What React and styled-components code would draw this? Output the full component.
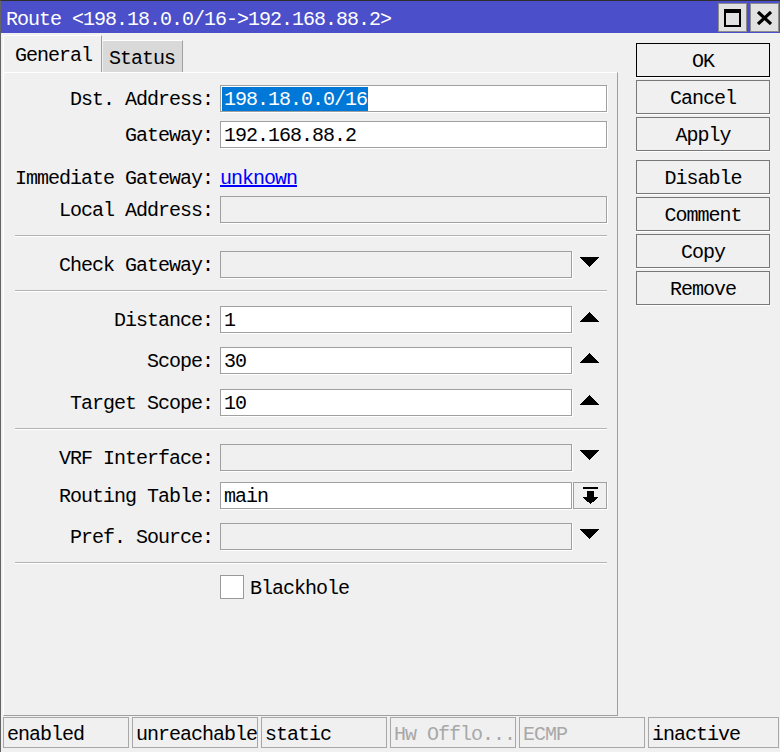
import styled, { createGlobalStyle } from 'styled-components'

const GlobalStyle = createGlobalStyle`
  html, body {
    margin: 0;
    padding: 0;
    background: #f0f0f0;
  }
  body {
    font-family: 'Liberation Mono', 'DejaVu Sans Mono', monospace;
    font-size: 20px;
    letter-spacing: -1px;
    color: #000;
    overflow: hidden;
  }
`

const Window = styled.div`
  box-sizing: border-box;
  width: 780px;
  height: 752px;
  display: flex;
  flex-direction: column;
  background: #f0f0f0;
  border-top: 1px solid #2f2f2f;
  border-left: 1px solid #646464;
`

const TitleBar = styled.div`
  flex: none;
  height: 32px;
  display: flex;
  justify-content: space-between;
  padding-left: 5px;
  background: #4b4fca;
  color: #fff;
`

const Title = styled.span`
  align-self: center;
  white-space: nowrap;
  padding-top: 5px;
`

const TitleButtons = styled.div`
  display: flex;
  gap: 3px;
  margin: 2px 1px 0 0;
`

const TitleButton = styled.div`
  box-sizing: border-box;
  width: 29px;
  height: 29px;
  display: flex;
  align-items: center;
  justify-content: center;
  background: #e1e1e1;
  border: 1px solid #8c8c8c;
`

const Body = styled.div`
  flex: 1;
  display: flex;
  padding-left: 2px;
  min-height: 0;
`

const TabArea = styled.div`
  width: 615px;
  display: flex;
  flex-direction: column;
`

const TabStrip = styled.div`
  flex: none;
  height: 39px;
  display: flex;
  align-items: flex-end;
`

const Tab = styled.div`
  box-sizing: border-box;
  display: flex;
  align-items: center;
  height: ${p => (p.$active ? 37 : 32)}px;
  width: ${p => (p.$active ? 99 : 80)}px;
  padding: 3px 0 0 ${p => (p.$active ? 11 : 6)}px;
  background: ${p => (p.$active ? '#f0f0f0' : '#d9d9d9')};
  border-top: 1px solid #fff;
  border-left: ${p => (p.$active ? '1px solid #fff' : 'none')};
  border-right: 1px solid #a0a0a0;
  margin-left: ${p => (p.$active ? 0 : 1)}px;
`

const Panel = styled.div`
  flex: 1;
  box-sizing: border-box;
  display: flex;
  flex-direction: column;
  padding: 12px 10px 0 11px;
  border-top: 1px solid #fff;
  border-left: 1px solid #fff;
  border-right: 1px solid #a0a0a0;
  border-bottom: 1px solid #a0a0a0;
`

const Row = styled.div`
  display: flex;
  align-items: center;
  gap: 7px;
  height: ${p => p.$height || 27}px;
  margin-top: ${p => p.$gap || 0}px;
`

const Label = styled.div`
  flex: none;
  width: 198px;
  padding-top: 2px;
  text-align: right;
  white-space: nowrap;
`

const Control = styled.div`
  flex: 1;
  display: flex;
  height: 100%;
`

const Field = styled.div`
  flex: 1;
  box-sizing: border-box;
  display: flex;
  align-items: center;
  padding-left: 1px;
  background: ${p => (p.$disabled ? '#f0f0f0' : '#fff')};
  border: 1px solid #a0a0a0;
  box-shadow: 1px 1px 0 #fff;
`

const Value = styled.span`
  box-sizing: border-box;
  height: 24px;
  line-height: 22px;
  padding: 2px 1px 0 2px;
  background: ${p => (p.$selected ? '#0078d7' : 'transparent')};
  color: ${p => (p.$selected ? '#fff' : '#000')};
  white-space: nowrap;
`

const Accessory = styled.div`
  flex: none;
  width: 35px;
  display: flex;
  align-items: center;
  justify-content: center;
  padding-bottom: 5px;
  box-sizing: border-box;
`

const MenuButton = styled.div`
  flex: none;
  box-sizing: border-box;
  width: 34px;
  margin-left: 1px;
  display: flex;
  align-items: center;
  justify-content: center;
  background: #f0f0f0;
  border: 1px solid #a0a0a0;
  box-shadow: 1px 1px 0 #fff;
`

const Link = styled.a`
  padding-top: 2px;
  color: #0000ff;
  text-decoration: underline;
  cursor: pointer;
`

const Divider = styled.div`
  flex: none;
  margin-top: 12px;
  border-top: 1px solid #b4b4b4;
  border-bottom: 1px solid #fff;
`

const CheckRow = styled.div`
  display: flex;
  align-items: center;
  gap: 6px;
  height: 24px;
  margin: 11px 0 0 205px;
`

const CheckLabel = styled.span`
  padding-top: 2px;
`

const CheckBox = styled.div`
  box-sizing: border-box;
  width: 24px;
  height: 24px;
  background: #fff;
  border: 1px solid #999;
`

const ButtonColumn = styled.div`
  width: 134px;
  margin-left: 18px;
  padding-top: 10px;
  display: flex;
  flex-direction: column;
  gap: 3px;
`

const Button = styled.div`
  box-sizing: border-box;
  height: 34px;
  display: flex;
  align-items: center;
  justify-content: center;
  padding-top: 2px;
  margin-top: ${p => p.$gap || 0}px;
  background: #f0f0f0;
  border: 1px solid ${p => (p.$default ? '#000' : '#787878')};
  box-shadow: 0 1px 0 #fff;
`

const StatusBar = styled.div`
  flex: none;
  box-sizing: border-box;
  height: 36px;
  display: flex;
  gap: 3px;
  padding: 1px 1px 0 2px;
`

const StatusCell = styled.div`
  box-sizing: border-box;
  height: 31px;
  width: ${p => (p.$grow ? 'auto' : '126px')};
  flex: ${p => (p.$grow ? 1 : 'none')};
  display: flex;
  align-items: center;
  padding: 3px 0 0 3px;
  overflow: hidden;
  white-space: nowrap;
  border: 1px solid #a8a8a8;
  color: ${p => (p.$muted ? '#a8a8a8' : '#000')};
`

const DownArrow = () => (
  <svg width="19" height="10" viewBox="0 0 19 10" shapeRendering="crispEdges">
    <polygon points="0,0 19,0 9.5,10" fill="#000" />
  </svg>
)

const UpArrow = () => (
  <svg width="19" height="10" viewBox="0 0 19 10" shapeRendering="crispEdges">
    <polygon points="9.5,0 19,10 0,10" fill="#000" />
  </svg>
)

const DropToBottom = () => (
  <svg width="17" height="17" viewBox="0 0 17 17" shapeRendering="crispEdges">
    <rect x="1" y="0" width="15" height="2" fill="#000" />
    <rect x="5" y="4" width="7" height="6" fill="#000" />
    <polygon points="0,10 17,10 8.5,17" fill="#000" />
  </svg>
)

const MaximizeIcon = () => (
  <svg width="17" height="18" viewBox="0 0 17 18" shapeRendering="crispEdges">
    <rect x="1" y="1" width="15" height="16" fill="none" stroke="#000" strokeWidth="2" />
    <rect x="0" y="0" width="17" height="4" fill="#000" />
  </svg>
)

const CloseIcon = () => (
  <svg width="15" height="14" viewBox="0 0 15 14">
    <path d="M1 1 L14 13 M14 1 L1 13" stroke="#000" strokeWidth="3.2" />
  </svg>
)

const FieldRow = ({ label, gap, children, accessory, disabled, menu }) => (
  <Row $gap={gap}>
    <Label>{label}</Label>
    <Control>
      <Field $disabled={disabled}>{children}</Field>
      {accessory && <Accessory>{accessory}</Accessory>}
      {menu && <MenuButton><DropToBottom /></MenuButton>}
    </Control>
  </Row>
)

const statusCells = [
  { text: 'enabled' },
  { text: 'unreachable' },
  { text: 'static' },
  { text: 'Hw Offlo...', muted: true },
  { text: 'ECMP', muted: true },
  { text: 'inactive', grow: true },
]

export default function App() {
  return (
    <>
      <GlobalStyle />
      <Window>
        <TitleBar>
          <Title>Route &lt;198.18.0.0/16-&gt;192.168.88.2&gt;</Title>
          <TitleButtons>
            <TitleButton><MaximizeIcon /></TitleButton>
            <TitleButton><CloseIcon /></TitleButton>
          </TitleButtons>
        </TitleBar>

        <Body>
          <TabArea>
            <TabStrip>
              <Tab $active>General</Tab>
              <Tab>Status</Tab>
            </TabStrip>
            <Panel>
              <FieldRow label="Dst. Address:">
                <Value $selected>198.18.0.0/16</Value>
              </FieldRow>
              <FieldRow label="Gateway:" gap={9}>
                <Value>192.168.88.2</Value>
              </FieldRow>
              <Row $gap={16}>
                <Label>Immediate Gateway:</Label>
                <Link>unknown</Link>
              </Row>
              <FieldRow label="Local Address:" gap={5} disabled />

              <Divider />
              <FieldRow label="Check Gateway:" gap={14} disabled accessory={<DownArrow />} />

              <Divider />
              <FieldRow label="Distance:" gap={14} accessory={<UpArrow />}>
                <Value>1</Value>
              </FieldRow>
              <FieldRow label="Scope:" gap={14} accessory={<UpArrow />}>
                <Value>30</Value>
              </FieldRow>
              <FieldRow label="Target Scope:" gap={15} accessory={<UpArrow />}>
                <Value>10</Value>
              </FieldRow>

              <Divider />
              <FieldRow label="VRF Interface:" gap={14} disabled accessory={<DownArrow />} />
              <FieldRow label="Routing Table:" gap={11} menu>
                <Value>main</Value>
              </FieldRow>
              <FieldRow label="Pref. Source:" gap={14} disabled accessory={<DownArrow />} />

              <Divider />
              <CheckRow>
                <CheckBox />
                <CheckLabel>Blackhole</CheckLabel>
              </CheckRow>
            </Panel>
          </TabArea>

          <ButtonColumn>
            <Button $default>OK</Button>
            <Button>Cancel</Button>
            <Button>Apply</Button>
            <Button $gap={6}>Disable</Button>
            <Button>Comment</Button>
            <Button>Copy</Button>
            <Button>Remove</Button>
          </ButtonColumn>
        </Body>

        <StatusBar>
          {statusCells.map(cell => (
            <StatusCell key={cell.text} $muted={cell.muted} $grow={cell.grow}>
              {cell.text}
            </StatusCell>
          ))}
        </StatusBar>
      </Window>
    </>
  )
}
